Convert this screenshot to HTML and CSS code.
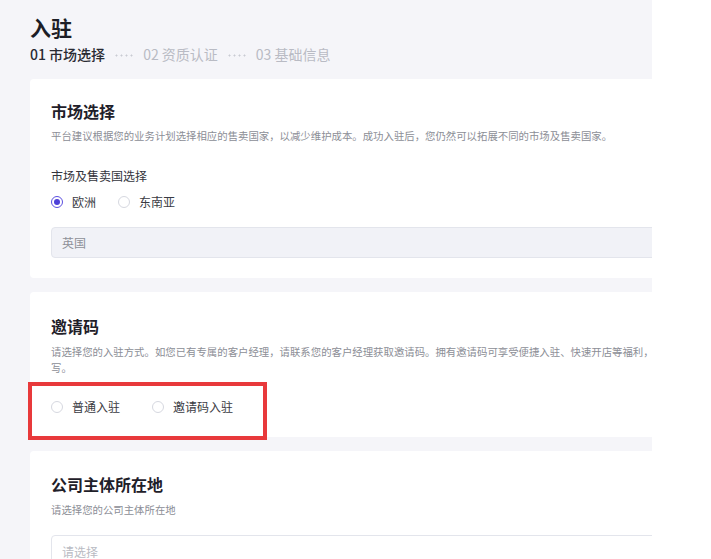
FILE: index.html
```html
<!DOCTYPE html>
<html lang="zh-CN">
<head>
    <meta charset="UTF-8">
    <meta name="viewport" content="width=device-width, initial-scale=1.0">
    <title>入驻</title>
    <link rel="stylesheet" href="styles.css">
</head>
<body>
    <div class="page">
        <div class="header">
            <h1>入驻</h1>
            <div class="steps">
                <span class="step active">01 市场选择</span>
                <span class="dots"></span>
                <span class="step">02 资质认证</span>
                <span class="dots"></span>
                <span class="step">03 基础信息</span>
            </div>
        </div>

        <div class="card market">
            <h2>市场选择</h2>
            <p class="desc">平台建议根据您的业务计划选择相应的售卖国家，以减少维护成本。成功入驻后，您仍然可以拓展不同的市场及售卖国家。</p>
            <div class="label">市场及售卖国选择</div>
            <div class="radios">
                <label class="radio"><span class="circle checked"></span>欧洲</label>
                <label class="radio"><span class="circle"></span>东南亚</label>
            </div>
            <div class="select filled">英国</div>
        </div>

        <div class="card invite">
            <h2>邀请码</h2>
            <p class="desc">请选择您的入驻方式。如您已有专属的客户经理，请联系您的客户经理获取邀请码。拥有邀请码可享受便捷入驻、快速开店等福利，请按需填写。</p>
            <div class="radios wide">
                <label class="radio"><span class="circle"></span>普通入驻</label>
                <label class="radio"><span class="circle"></span>邀请码入驻</label>
            </div>
            <div class="mark"></div>
        </div>

        <div class="card company">
            <h2>公司主体所在地</h2>
            <p class="desc">请选择您的公司主体所在地</p>
            <div class="select empty">请选择</div>
        </div>
    </div>
</body>
</html>
```

FILE: styles.css
```css
body {
    margin: 0;
    background: #fff;
    font-family: "Noto Sans CJK SC", "Noto Sans", sans-serif;
    color: #23242c;
}
.page {
    width: 622px;
    height: 559px;
    padding-left: 30px;
    background: #f5f5f9;
    overflow: hidden;
}
.header {
    padding: 12px 0 15px;
}
h1 {
    margin: 0;
    font-size: 21px;
    line-height: 30px;
    font-weight: 700;
    color: #1d1e26;
}
.steps {
    margin-top: 2px;
    display: flex;
    align-items: center;
    font-size: 14px;
    line-height: 20px;
    white-space: nowrap;
}
.step {
    color: #b9bbc4;
}
.step.active {
    color: #2a2b33;
    font-weight: 500;
}
.dots {
    width: 19px;
    height: 3px;
    margin: 2px 10px 0 9px;
    background: radial-gradient(circle, #c9cbd3 0.8px, transparent 1.2px) 0 0 / 5px 3px repeat-x;
}
.card {
    position: relative;
    width: 651px;
    padding: 20px 21px 21px;
    margin-bottom: 14px;
    background: #fff;
    border-radius: 4px;
}
h2 {
    margin: 0;
    font-size: 16px;
    line-height: 24px;
    font-weight: 700;
    color: #1f2029;
}
.desc {
    margin: 4px 0 0;
    font-size: 10.4px;
    line-height: 18px;
    color: #8c8e96;
}
.label {
    margin-top: 22px;
    font-size: 12px;
    line-height: 18px;
    color: #33343c;
}
.radios {
    margin-top: 7px;
    display: flex;
    gap: 22px;
    font-size: 12px;
    line-height: 20px;
    color: #3a3b43;
}
.radios.wide {
    gap: 32px;
}
.radio {
    display: flex;
    align-items: center;
}
.circle {
    box-sizing: border-box;
    width: 12px;
    height: 12px;
    margin-right: 9px;
    border: 1px solid #d6d8e0;
    border-radius: 50%;
    background: #fff;
    display: flex;
    align-items: center;
    justify-content: center;
}
.circle.checked {
    border-color: #5b4fe0;
}
.circle.checked::after {
    content: "";
    width: 6px;
    height: 6px;
    border-radius: 50%;
    background: #4d40d8;
}
.select {
    box-sizing: border-box;
    height: 31px;
    padding: 0 10px;
    border: 1px solid #e3e5ec;
    border-radius: 4px;
    font-size: 12px;
    line-height: 29px;
}
.select.filled {
    margin-top: 15px;
    background: #f1f2f7;
    color: #8e9098;
}
.market {
    padding-bottom: 20px;
}
.invite {
    padding-top: 22px;
    padding-bottom: 20px;
}
.invite .desc {
    margin-top: 6px;
    line-height: 16px;
}
.invite .radios {
    margin-top: 21px;
}
.company {
    padding-top: 21px;
}
.company .desc {
    margin-top: 5px;
}
.select.empty {
    margin-top: 16px;
    height: 34px;
    background: #fff;
    color: #b9bbc3;
    line-height: 32px;
}
.mark {
    position: absolute;
    left: -2px;
    top: 90px;
    width: 231px;
    height: 50px;
    border: 4px solid #e8393b;
}
```
